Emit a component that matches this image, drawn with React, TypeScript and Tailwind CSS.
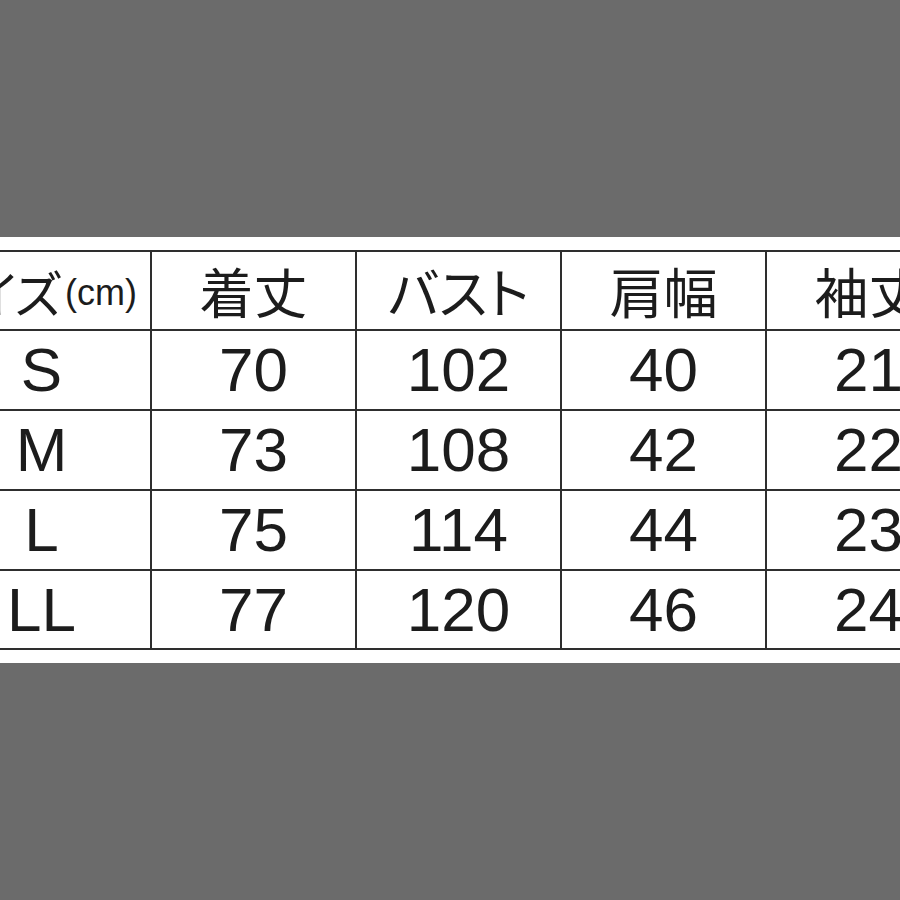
import React from 'react';

const rows = [
  ['S', '70', '102', '40', '21'],
  ['M', '73', '108', '42', '22'],
  ['L', '75', '114', '44', '23'],
  ['LL', '77', '120', '46', '24'],
];

const rowHeights = ['h-[78px]', 'h-[78px]', 'h-[78px]', 'h-[77px]'];

const jp = "[font-family:'Noto_Sans_CJK_JP',sans-serif] [font-feature-settings:'palt']";

export default function App() {
  return (
    <div className="w-[900px] h-[900px] bg-[#6b6b6b] overflow-hidden flex flex-col">
      <div className="h-[237px]" />
      <div className="h-[426px] bg-white pt-[13px]">
        <div className="ml-[-55px] w-fit bg-[#2e2e2e] p-[2px] flex flex-col gap-[2px]">
          {/* header */}
          <div className="flex gap-[2px]">
            <div className="w-[203px] h-[77px] bg-white flex items-center justify-end pr-[13px] whitespace-nowrap overflow-hidden">
              <span className={`${jp} text-[50px] text-[#1c1c1c] leading-none shrink-0`}>サイズ</span>
              <span className="font-['Liberation_Sans',sans-serif] text-[36px] text-[#1c1c1c] leading-none ml-[4px] mt-[4px] shrink-0">(cm)</span>
            </div>
            {['着丈', 'バスト', '肩幅', '袖丈'].map((h) => (
              <div key={h} className="w-[203px] h-[77px] bg-white flex items-center justify-center">
                <span className={`${jp} text-[54px] text-[#1c1c1c] leading-none whitespace-nowrap`}>{h}</span>
              </div>
            ))}
          </div>
          {rows.map((r, i) => (
            <div key={r[0]} className="flex gap-[2px]">
              {r.map((c, j) => (
                <div
                  key={j}
                  className={`w-[203px] ${rowHeights[i]} bg-white flex items-center justify-center font-['Liberation_Sans',sans-serif] text-[62px] text-[#1c1c1c] leading-none ${j === 0 ? 'pr-[14px]' : ''}`}
                >
                  {c}
                </div>
              ))}
            </div>
          ))}
        </div>
      </div>
      <div className="flex-1" />
    </div>
  );
}
